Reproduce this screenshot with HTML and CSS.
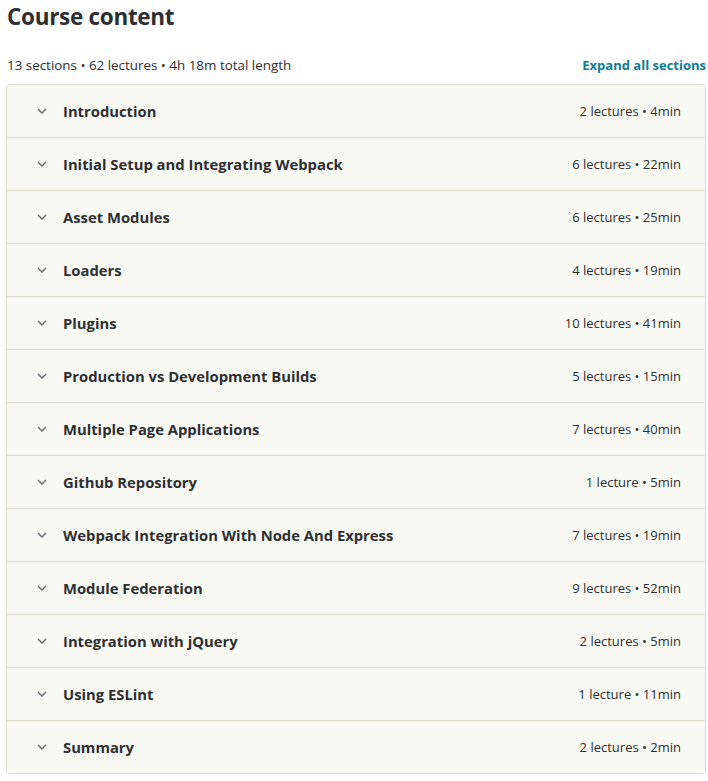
FILE: index.html
```html
<!DOCTYPE html>
<html lang="en">
<head>
  <meta charset="UTF-8" />
  <meta name="viewport" content="width=device-width, initial-scale=1.0" />
  <title>Course content</title>
  <link rel="stylesheet" href="styles.css">
</head>
<body>
  <div class="course-content">
    <h2 class="heading">Course content</h2>
    <div class="summary">
      <span class="stats">13 sections • 62 lectures • 4h 18m total length</span>
      <button class="expand-all">Expand all sections</button>
    </div>
    <div class="sections">
      <div class="section">
        <svg class="chevron" viewBox="0 0 10 6"><path d="M1 1l4 4 4-4" /></svg>
        <span class="section-title">Introduction</span>
        <span class="section-meta">2 lectures • 4min</span>
      </div>
      <div class="section">
        <svg class="chevron" viewBox="0 0 10 6"><path d="M1 1l4 4 4-4" /></svg>
        <span class="section-title">Initial Setup and Integrating Webpack</span>
        <span class="section-meta">6 lectures • 22min</span>
      </div>
      <div class="section">
        <svg class="chevron" viewBox="0 0 10 6"><path d="M1 1l4 4 4-4" /></svg>
        <span class="section-title">Asset Modules</span>
        <span class="section-meta">6 lectures • 25min</span>
      </div>
      <div class="section">
        <svg class="chevron" viewBox="0 0 10 6"><path d="M1 1l4 4 4-4" /></svg>
        <span class="section-title">Loaders</span>
        <span class="section-meta">4 lectures • 19min</span>
      </div>
      <div class="section">
        <svg class="chevron" viewBox="0 0 10 6"><path d="M1 1l4 4 4-4" /></svg>
        <span class="section-title">Plugins</span>
        <span class="section-meta">10 lectures • 41min</span>
      </div>
      <div class="section">
        <svg class="chevron" viewBox="0 0 10 6"><path d="M1 1l4 4 4-4" /></svg>
        <span class="section-title">Production vs Development Builds</span>
        <span class="section-meta">5 lectures • 15min</span>
      </div>
      <div class="section">
        <svg class="chevron" viewBox="0 0 10 6"><path d="M1 1l4 4 4-4" /></svg>
        <span class="section-title">Multiple Page Applications</span>
        <span class="section-meta">7 lectures • 40min</span>
      </div>
      <div class="section">
        <svg class="chevron" viewBox="0 0 10 6"><path d="M1 1l4 4 4-4" /></svg>
        <span class="section-title">Github Repository</span>
        <span class="section-meta">1 lecture • 5min</span>
      </div>
      <div class="section">
        <svg class="chevron" viewBox="0 0 10 6"><path d="M1 1l4 4 4-4" /></svg>
        <span class="section-title">Webpack Integration With Node And Express</span>
        <span class="section-meta">7 lectures • 19min</span>
      </div>
      <div class="section">
        <svg class="chevron" viewBox="0 0 10 6"><path d="M1 1l4 4 4-4" /></svg>
        <span class="section-title">Module Federation</span>
        <span class="section-meta">9 lectures • 52min</span>
      </div>
      <div class="section">
        <svg class="chevron" viewBox="0 0 10 6"><path d="M1 1l4 4 4-4" /></svg>
        <span class="section-title">Integration with jQuery</span>
        <span class="section-meta">2 lectures • 5min</span>
      </div>
      <div class="section">
        <svg class="chevron" viewBox="0 0 10 6"><path d="M1 1l4 4 4-4" /></svg>
        <span class="section-title">Using ESLint</span>
        <span class="section-meta">1 lecture • 11min</span>
      </div>
      <div class="section">
        <svg class="chevron" viewBox="0 0 10 6"><path d="M1 1l4 4 4-4" /></svg>
        <span class="section-title">Summary</span>
        <span class="section-meta">2 lectures • 2min</span>
      </div>
    </div>
  </div>
</body>
</html>
```

FILE: styles.css
```css
body {
  margin: 0;
  padding: 0;
  background: #fff;
  color: #2d2f31;
  font-family: "Open Sans", "Noto Sans", sans-serif;
}
.course-content {
  padding: 0 2px 0 6px;
}
.heading {
  margin: 0;
  padding: 2px 0 0 1px;
  font-size: 22.5px;
  font-weight: 700;
  line-height: 30px;
  letter-spacing: -0.3px;
}
/* Stats line and expand link */
.summary {
  display: flex;
  justify-content: space-between;
  align-items: center;
  margin-top: 22px;
  height: 22px;
  margin-bottom: 8px;
}
.stats {
  font-size: 13.4px;
  padding-left: 1px;
}
.expand-all {
  border: none;
  background: none;
  padding: 0;
  font-family: inherit;
  font-size: 13px;
  font-weight: 700;
  color: #0f7c90;
  cursor: pointer;
}
.sections {
  border: 1px solid #dcdbcc;
  border-radius: 4px;
  overflow: hidden;
}
.section {
  display: flex;
  align-items: center;
  height: 52px;
  padding: 0 24px 0 30px;
  background: #f9f9f4;
  border-top: 1px solid #dcdbcc;
}
.section:first-child {
  border-top: none;
}
.chevron {
  width: 10px;
  height: 6px;
  margin-right: 16px;
  fill: none;
  stroke: #6a6f73;
  stroke-width: 1.5;
}
.section-title {
  flex: 1;
  font-size: 14.8px;
  font-weight: 700;
}
.section-meta {
  font-size: 13px;
}
```
